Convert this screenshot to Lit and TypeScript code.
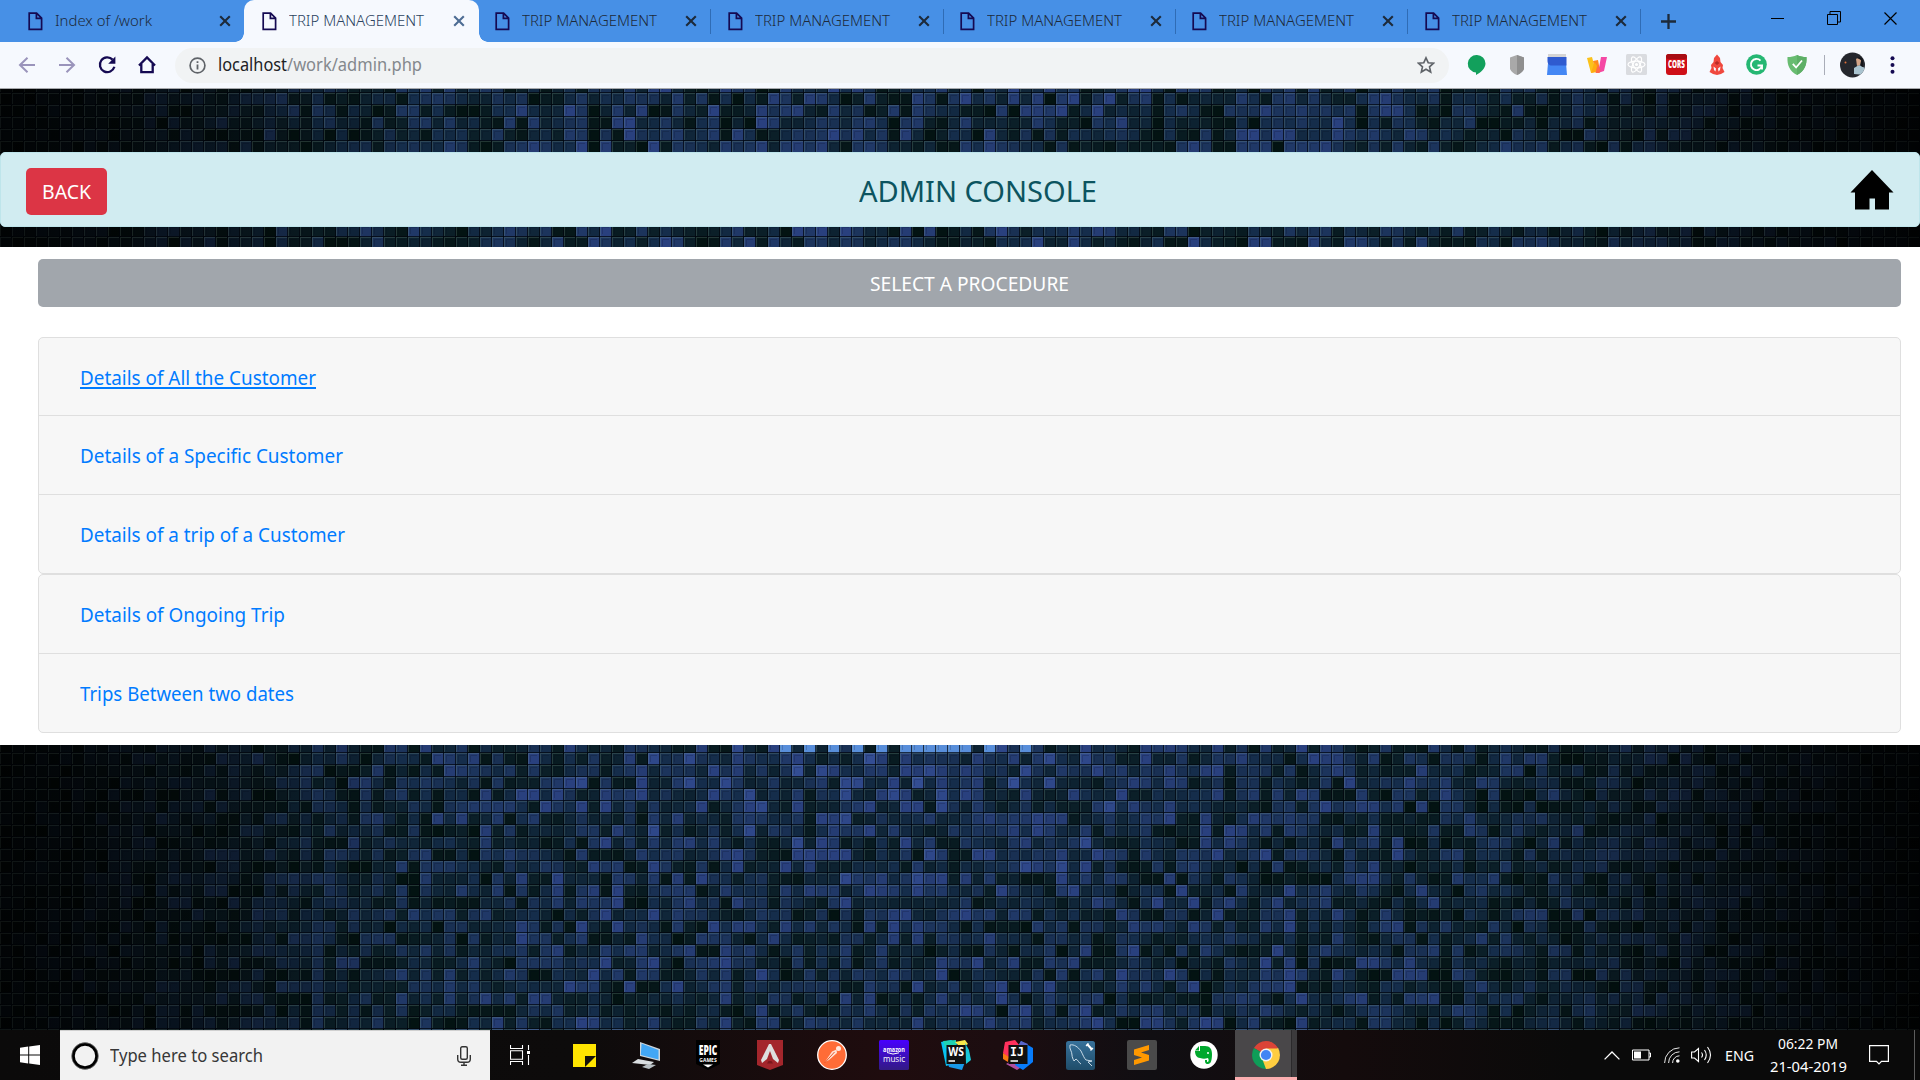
import { LitElement, html, svg, css, nothing } from "lit";
import { customElement, property, state } from "lit/decorators.js";
import { styleMap } from "lit/directives/style-map.js";
import { classMap } from "lit/directives/class-map.js";

/** Text condensed horizontally so that it occupies a given advance width. */
@customElement("fit-text")
class FitText extends LitElement {
  @property({ type: Number }) width = 0;
  @property() text = "";
  @state() private ratio = 1;

  static styles = css`
    :host { display: inline-block; white-space: pre; }
    .box { display: inline-block; vertical-align: top; }
    .glyphs { display: inline-block; vertical-align: top; transform-origin: 0 50%; }
    :host([underlined]) .glyphs { text-decoration: underline; text-decoration-thickness: 2px; text-underline-offset: 2px; text-decoration-skip-ink: none; }
  `;

  firstUpdated() {
    const glyphs = this.renderRoot.querySelector(".glyphs") as HTMLElement;
    const natural = glyphs.getBoundingClientRect().width;
    if (this.width && natural) this.ratio = this.width / natural;
  }

  render() {
    return html`<span class="box" style=${styleMap({ width: `${this.width}px` })}><span class="glyphs" style=${styleMap({ transform: `scaleX(${this.ratio.toFixed(4)})` })}>${this.text}</span></span>`;
  }
}

/** Mosaic wallpaper: 12px tiles, brightest in the middle and fading out sideways. */
@customElement("tile-wallpaper")
class TileWallpaper extends LitElement {
  static styles = css`
    :host { display: block; width: 1920px; height: 941px; }
    svg { display: block; }
  `;

  private noise(x: number, y: number) {
    let h = (x * 374761393 + y * 668265263) | 0;
    h = Math.imul(h ^ (h >>> 13), 1274126177);
    h = Math.imul(h ^ (h >>> 15), 2246822519);
    return ((h ^ (h >>> 16)) >>> 0) / 4294967296;
  }

  render() {
    const palette = [
      [3, 19, 18], [11, 31, 40], [18, 41, 66], [28, 52, 92], [41, 64, 126], [56, 84, 158],
    ];
    const glow = [65, 67, 69, 71, 73, 75, 76, 77, 78, 79, 80, 82, 85];
    const groups = new Map<string, string>();
    for (let r = 0; r < 80; r++) {
      if (r > 13 && r < 54) continue;
      for (let c = 0; c < 160; c++) {
        const px = c * 12;
        const py = r * 12 - 8;
        const d = Math.abs(px - 950) / 960;
        const env = Math.max(0, Math.min(1, (1 - d) * 1.7));
        const mid = Math.exp(-(Math.pow((px - 920) / 330, 2) + Math.pow((py - 680) / 110, 2)));
        let t = Math.pow(this.noise(c + 3, r + 11), 1.05) * (2.1 + 1.9 * env) + mid * 0.7;
        let k = 0.24 + 0.76 * Math.min(1, env * 1.35);
        t = Math.round(Math.min(5, t) * 3) / 3;
        k = Math.round(k * 14) / 14;
        const i = Math.min(4, Math.floor(t));
        const f = t - i;
        let rgb = palette[i].map((v, n) => Math.round((v + (palette[i + 1][n] - v) * f) * k));
        if (r === 55 && glow.includes(c)) rgb = [88, 142, 218];
        const key = `rgb(${rgb.join(",")})`;
        groups.set(key, (groups.get(key) ?? "") + `M${px} ${py}h12v12h-12z`);
      }
    }
    return html`<svg width="1920" height="941" viewBox="0 0 1920 941">
      <defs>
        <pattern id="bevel" width="12" height="12" y="4" patternUnits="userSpaceOnUse">
          <path d="M0 .5H11M.5 1V11" stroke="#86a89c" stroke-opacity=".24" fill="none" />
          <path d="M2.5 9V2.5H9" stroke="#000818" stroke-opacity=".18" fill="none" />
          <path d="M0 11.5H12M11.5 0V12" stroke="#00040c" stroke-opacity=".72" fill="none" />
        </pattern>
        <linearGradient id="edge">
          <stop offset="0" stop-color="#000" stop-opacity=".6" />
          <stop offset=".08" stop-color="#000" stop-opacity=".25" />
          <stop offset=".16" stop-color="#000" stop-opacity="0" />
          <stop offset=".84" stop-color="#000" stop-opacity="0" />
          <stop offset=".92" stop-color="#000" stop-opacity=".3" />
          <stop offset="1" stop-color="#000" stop-opacity=".7" />
        </linearGradient>
      </defs>
      ${[...groups].map(([fill, d]) => svg`<path fill=${fill} d=${d} />`)}
      <rect width="1920" height="941" fill="url(#bevel)" />
      <rect width="1920" height="941" fill="url(#edge)" />
    </svg>`;
  }
}

const pageIcon = html`<svg width="15" height="19" viewBox="0 0 15 19">
  <path d="M1.2 1.2H8.6L13.6 6.2V17.4H1.2Z M8.4 1.2V6.4H13.6" fill="none" stroke="#150a52" stroke-width="1.7" /></svg>`;

const crossIcon = html`<svg width="12" height="12" viewBox="0 0 12 12">
  <path d="M1.2 1.2L10.8 10.8M10.8 1.2L1.2 10.8" stroke="currentColor" stroke-width="2.1" /></svg>`;

@customElement("browser-tab")
class BrowserTab extends LitElement {
  @property() label = "";
  @property({ type: Number }) textWidth = 0;
  @property({ type: Boolean, reflect: true }) active = false;
  @property({ type: Boolean }) divider = false;

  static styles = css`
    :host { display: block; width: 232.4px; height: 42px; flex: none; color: #1d2a3a; }
    .tab {
      display: flex; align-items: center; box-sizing: border-box; height: 42px;
      padding-left: 14px; position: relative;
    }
    .divided { padding-left: 16.5px; }
    .active { background: #f6f9fe; border-radius: 10px 10px 0 0; margin-left: -2px; padding-left: 18px; color: #2b435f; }
    .active::before, .active::after {
      content: ""; position: absolute; bottom: 0; width: 9px; height: 9px;
    }
    .active::before { left: -9px; background: radial-gradient(circle at 0 0, transparent 8.5px, #f6f9fe 9px); }
    .active::after { right: -9px; background: radial-gradient(circle at 100% 0, transparent 8.5px, #f6f9fe 9px); }
    .text { flex: 1; padding-left: 12px; font-size: 15px; font-weight: 300; line-height: 22px; margin-top: -3px; }
    .close { display: flex; width: 12px; margin-right: 15px; }
    .divided .close { margin-right: 13px; }
    .active .close { color: #4d6c93; margin-right: 14px; }
    .sep { width: 1px; height: 25px; background: #2f6cb5; }
  `;

  render() {
    return html`<div class=${classMap({ tab: true, active: this.active, divided: this.divider })}>
      ${pageIcon}
      <fit-text class="text" .width=${this.textWidth} .text=${this.label}></fit-text>
      <span class="close">${crossIcon}</span>
      ${this.divider ? html`<span class="sep"></span>` : nothing}
    </div>`;
  }
}

const nav = {
  back: html`<svg width="18" height="18" viewBox="0 0 18 18"><path d="M17 9H2.5M9.5 1.7L2 9l7.5 7.3" fill="none" stroke="#9a94bb" stroke-width="2" /></svg>`,
  forward: html`<svg width="18" height="18" viewBox="0 0 18 18"><path d="M1 9H15.5M8.5 1.7L16 9l-7.500 7.3" fill="none" stroke="#9a94bb" stroke-width="2" /></svg>`,
  reload: html`<svg width="20" height="20" viewBox="0 0 20 20"><path d="M15.6 4.6A7.4 7.4 0 1 0 17.4 11.8" fill="none" stroke="#150a52" stroke-width="2.3" /><path d="M18.4 1.6V8.8H11.2Z" fill="#150a52" /></svg>`,
  home: html`<svg width="20" height="20" viewBox="0 0 20 20"><path d="M4.3 9V17.2H15.7V9M2 10.5L10 2.4L18 10.5" fill="none" stroke="#150a52" stroke-width="2.3" /></svg>`,
};

const extensions = [
  html`<svg width="20" height="22" viewBox="0 0 20 22"><path d="M10 1a8.7 8.7 0 0 0-1 17.4V21c4.5-2.2 9.5-6.5 9.5-11.5A8.6 8.6 0 0 0 10 1z" fill="#12a05c" /></svg>`,
  html`<svg width="16" height="22" viewBox="0 0 16 22"><path d="M8 1L15 3.500V15Q13 19 8 21Q3 19 1 15V3.500z" fill="#a9a9a9" /><path d="M8 1L15 3.500V15Q13 19 8 21z" fill="#8f8f8f" /></svg>`,
  html`<svg width="20" height="21" viewBox="0 0 20 21"><path d="M1 0h18v5H1z" fill="#d4d4d4" /><path d="M1 9h18l1 12H0z" fill="#4487f4" /><path d="M.5 3h19v8.500h-16C1.500 11 .5 9 .5 7z" fill="#2f5bd0" /></svg>`,
  html`<svg width="20" height="16" viewBox="0 0 20 16"><path d="M0 1L5 0 9 15 4 16Z" fill="#fbc21b" /><path d="M6 4L11 3 13 14 9 16Z" fill="#ff8a1f" /><path d="M4 16L7.500 5 10 9 8.500 15Z" fill="#ffab10" /><path d="M11 16L14 0H20L17 14Z" fill="#f548a4" /><path d="M8.500 16L11 8 13.500 13 12.500 16Z" fill="#ff6a4a" /></svg>`,
  html`<svg width="21" height="21" viewBox="0 0 21 21"><rect width="21" height="21" rx="1.500" fill="#dadce0" /><g fill="none" stroke="#fff" stroke-width="1.200"><ellipse cx="10.500" cy="10.500" rx="8.500" ry="3.300" /><ellipse cx="10.500" cy="10.500" rx="8.500" ry="3.300" transform="rotate(60 10.500 10.500)" /><ellipse cx="10.500" cy="10.500" rx="8.500" ry="3.300" transform="rotate(120 10.500 10.500)" /></g><circle cx="10.500" cy="10.500" r="1.600" fill="#fff" /></svg>`,
  html`<svg width="21" height="21" viewBox="0 0 21 21"><rect width="21" height="21" rx="3" fill="#cf0f17" /><rect width="21" height="5" rx="2.500" fill="#a80d13" /><g transform="translate(10.500 14) scale(.7 1.1)"><text font-family="Open Sans, sans-serif" font-weight="800" font-size="9" fill="#fff" text-anchor="middle">CORS</text></g></svg>`,
  html`<svg width="16" height="22" viewBox="0 0 16 22"><path d="M8 .500L11 4 11.500 8 14 11 13.500 14 15.500 18 12 20 8 21 4 20 .500 18 2.500 14 2 11 4.500 8 5 4Z" fill="#f0483e" /><path d="M4.500 12.500L7 14.500 6.500 17.500 5 16ZM11.500 12.500L9 14.500 9.500 17.500 11 16Z" fill="#f6f9fe" /><path d="M5.500 9L8 7 10.500 9 8 11Z" fill="#b92c27" /></svg>`,
  html`<svg width="21" height="21" viewBox="0 0 21 21"><circle cx="10.500" cy="10.500" r="10.300" fill="#25b773" /><path d="M14.500 6.600A5.600 5.600 0 1 0 16 11.500H11.500M16 11v4.500" fill="none" stroke="#fff" stroke-width="1.900" /></svg>`,
  html`<svg width="20" height="22" viewBox="0 0 20 22"><path d="M10 1c3 1.500 6 2 9.500 2 .5 8-2 14-9.500 18C2.500 17 0 11 .5 3 4 3 7 2.500 10 1z" fill="#68bc71" /><path d="M10 1c3 1.500 6 2 9.500 2 .5 8-2 14-9.500 18z" fill="#5daf66" /><path d="M5.800 9.800l3.300 3.700L15 6.500" fill="none" stroke="#fff" stroke-width="1.800" /></svg>`,
];

@customElement("browser-chrome")
class BrowserChrome extends LitElement {
  static styles = css`
    :host { display: block; }
    .strip { display: flex; height: 42px; background: #4790e6; padding-left: 14px; }
    .plus { display: flex; align-items: center; padding-left: 20.500px; flex: 1; color: #1d2a3a; }
    .win { display: flex; align-items: center; height: 36px; padding-right: 1px; }
    .win span { display: flex; justify-content: center; width: 56.500px; }
    .bar { display: flex; align-items: center; height: 46px; background: #f6f9fe; padding-left: 7px; border-bottom: 1px solid #a6a8ab; }
    .cell { display: flex; align-items: center; justify-content: center; width: 40px; flex: none; margin-top: -1px; }
    .omni {
      display: flex; align-items: center; box-sizing: border-box; width: 1274px; height: 35px; border-radius: 18px;
      background: #f1f3f4; margin: 0 7.500px 0 8px; padding: 0 14px; font-size: 17.500px; line-height: 24px;
    }
    .host { margin: -2px 0 0 11.500px; color: #202124; }
    .path { flex: 1; margin-top: -2px; color: #84888d; }
    .rule { width: 16px; display: flex; justify-content: center; }
    .rule i { width: 1px; height: 20px; background: #a9adb8; }
  `;

  private tabs = [
    { label: "Index of /work", width: 97 },
    ...Array.from({ length: 6 }, () => ({ label: "TRIP MANAGEMENT", width: 135 })),
  ];

  render() {
    return html`
      <div class="strip">
        ${this.tabs.map((t, i) => html`<browser-tab .label=${t.label} .textWidth=${t.width} .active=${i === 1} .divider=${i > 1}></browser-tab>`)}
        <span class="plus"><svg width="15" height="15" viewBox="0 0 15 15"><path d="M7.500 0V15M0 7.500H15" stroke="currentColor" stroke-width="2.300" /></svg></span>
        <div class="win">
          <span><svg width="13" height="13" viewBox="0 0 13 13"><path d="M0 6.500H13" stroke="#000" /></svg></span>
          <span><svg width="14" height="14" viewBox="0 0 14 14"><path d="M.500 3.500H10.500V13.500H.500ZM3 3V.500H13.500V11H11" fill="none" stroke="#000" /></svg></span>
          <span><svg width="13" height="13" viewBox="0 0 13 13"><path d="M.500 .500L12.500 12.500M12.500 .500L.500 12.500" stroke="#000" stroke-width="1.200" /></svg></span>
        </div>
      </div>
      <div class="bar">
        ${Object.values(nav).map((i) => html`<span class="cell">${i}</span>`)}
        <div class="omni">
          <svg width="17" height="17" viewBox="0 0 17 17"><circle cx="8.500" cy="8.500" r="7.400" fill="none" stroke="#5f6368" stroke-width="1.700" /><path d="M8.500 7.500V12.500M8.500 4.200V6" stroke="#5f6368" stroke-width="1.800" /></svg>
          <fit-text class="host" .width=${69} .text=${"localhost"}></fit-text>
          <fit-text class="path" .width=${135} .text=${"/work/admin.php"}></fit-text>
          <svg width="18" height="18" viewBox="0 0 18 18"><path d="M9 1.800L11.200 6.700L16.500 7.200L12.500 10.800L13.700 16L9 13.200L4.300 16L5.500 10.800L1.500 7.200L6.800 6.700Z" fill="none" stroke="#5f6368" stroke-width="1.600" /></svg>
        </div>
        ${extensions.map((i) => html`<span class="cell">${i}</span>`)}
        <span class="rule"><i></i></span>
        <span class="cell"><svg width="25" height="26" viewBox="0 0 25 26"><defs><clipPath id="av"><circle cx="12.500" cy="13" r="12.500" /></clipPath></defs><g clip-path="url(#av)"><rect width="25" height="26" fill="#25272d" /><path d="M14 16l5-3 6 3v7l-11-1z" fill="#a9c3cf" /><path d="M16 7c2-2 5-1 5 2l-1 4-3 1z" fill="#d3a487" /><path d="M17 6c3-2 6 0 6 3v6l-2-1V8z" fill="#15161a" /><circle cx="5.500" cy="10.500" r="1" fill="#e0703a" /></g></svg></span>
        <span class="cell"><svg width="5" height="18" viewBox="0 0 5 18"><g fill="#150a52"><circle cx="2.500" cy="2.300" r="2" /><circle cx="2.500" cy="9" r="2" /><circle cx="2.500" cy="15.700" r="2" /></g></svg></span>
      </div>`;
  }
}

@customElement("admin-page")
class AdminPage extends LitElement {
  static styles = css`
    :host { display: grid; height: 941px; overflow: hidden; background: #02060a; }
    tile-wallpaper, .content { grid-area: 1 / 1; }
    .content { display: flex; flex-direction: column; position: relative; padding-top: 63px; }
    .alert {
      display: flex; align-items: center; box-sizing: border-box; height: 75px; margin-bottom: 20px; padding: 0 25px;
      background: #d1ecf1; border: 1px solid #bee5eb; border-radius: 5px; color: #0c5460;
    }
    .back { display: flex; align-items: center; justify-content: center; width: 81px; height: 47px; border-radius: 5px; background: #dc3545; color: #fff; font-size: 20px; margin-top: 4px; line-height: 30px; }
    .title { flex: 1; text-align: center; font-size: 29.500px; line-height: 40px; margin: 3px 2px 0 0; }
    .panel { background: #fff; padding: 12px 19px 12px 38px; }
    .head {
      display: flex; align-items: center; justify-content: center; height: 48px; border-radius: 5px; margin-bottom: 30px;
      background: #a1a6ac; color: #fff; font-size: 20px; line-height: 28px;
    }
    .group { border: 1px solid #dfdfdf; border-radius: 5px; background: #f7f7f7; overflow: hidden; }
    .row { display: flex; align-items: center; box-sizing: border-box; height: 79px; padding-left: 41px; }
    .row + .row { border-top: 1px solid #dfdfdf; }
    .first { height: 77px; }
    .short { height: 78px; }
    .link { color: #007bff; font-size: 20px; line-height: 28px; padding-top: 2px; }
    .back-text, .head-text { padding-top: 1px; }
  `;

  private groups = [
    [
      { text: "Details of All the Customer", width: 236, hover: true },
      { text: "Details of a Specific Customer", width: 263 },
      { text: "Details of a trip of a Customer", width: 265 },
    ],
    [
      { text: "Details of Ongoing Trip", width: 205 },
      { text: "Trips Between two dates", width: 214 },
    ],
  ];

  render() {
    return html`
      <tile-wallpaper></tile-wallpaper>
      <div class="content">
        <div class="alert">
          <span class="back"><fit-text class="back-text" .width=${49} .text=${"BACK"}></fit-text></span>
          <span class="title"><fit-text .width=${238} .text=${"ADMIN CONSOLE"}></fit-text></span>
          <svg width="44" height="40" viewBox="0 0 44 40"><path d="M22 0L43.500 22.500H39V39.500H25V28.500H19.500V39.500H5V22.500H.500Z" fill="#000" /></svg>
        </div>
        <div class="panel">
          <div class="head"><fit-text class="head-text" .width=${199} .text=${"SELECT A PROCEDURE"}></fit-text></div>
          ${this.groups.map((g, gi) => html`<div class="group">
            ${g.map((r: any, i) => html`<div class=${classMap({ row: true, first: gi === 0 && i === 0, short: gi === 1 && i === 0 })}>
              <fit-text class="link" ?underlined=${!!r.hover} .width=${r.width} .text=${r.text}></fit-text>
            </div>`)}
          </div>`)}
        </div>
      </div>`;
  }
}

const apps = [
  html`<svg width="23" height="23" viewBox="0 0 23 23"><path d="M0 0H23V23H0Z" fill="#ffe500" /><path d="M12 12H23V23H12Z" fill="#14120a" /><path d="M23 12V23H12Z" fill="#ffe500" /></svg>`,
  html`<svg width="28" height="28" viewBox="0 0 28 28"><path d="M8 1L28 8V20L8 15Z" fill="#cfd6da" /><path d="M9.500 2.500L26.500 9V18.500L8.800 14Z" fill="#42a7f5" /><path d="M6 18L22 21 18 24 0 22Z" fill="#d9dde0" /><path d="M16 23l8 1-7 4-7-2z" fill="#b9c0c5" /></svg>`,
  html`<svg width="26" height="30" viewBox="0 0 26 30"><path d="M1 0H25V24L13 30L1 24Z" fill="#000" /><g fill="#fff" text-anchor="middle" font-family="Open Sans, sans-serif"><g transform="translate(13 15) scale(.68 1.15)"><text font-weight="800" font-size="12.500">EPIC</text></g><g transform="translate(13 22)"><text font-weight="700" font-size="5">GAMES</text></g></g><path d="M8 24.500H18L13 27.500Z" fill="#fff" /></svg>`,
  html`<svg width="26" height="30" viewBox="0 0 26 30"><path d="M0 0H26V25L13 30L0 25Z" fill="#a4262c" /><path d="M12 4H14L17 10 22 20 21 23 16 19 13 11 10 19 5 23 4 20 9 10Z" fill="#dedede" /><path d="M11.500 21h3l1.500 2.500h-6z" fill="#7c171d" /></svg>`,
  html`<svg width="30" height="30" viewBox="0 0 30 30"><circle cx="15" cy="15" r="14.300" fill="#ff6c37" stroke="#fff" stroke-width="1.300" /><circle cx="21.500" cy="8.500" r="2.500" fill="#ffe9df" /><path d="M8 22L15 11.500 19.500 9.500 20 13 12 20Z" fill="#ffe1d3" /><path d="M7.500 23L17.500 12" stroke="#e8572a" /></svg>`,
  html`<svg width="30" height="30" viewBox="0 0 30 30"><defs><linearGradient id="am" x2="0" y2="1"><stop stop-color="#4800ff" /><stop offset="1" stop-color="#321a83" /></linearGradient></defs><rect width="30" height="30" rx="1.500" fill="url(#am)" /><g fill="#fff" text-anchor="middle" font-family="Open Sans, sans-serif"><g transform="translate(15 11.500) scale(.85 1)"><text font-weight="700" font-size="6.500">amazon</text></g><g transform="translate(15 21.500) scale(.95 1)"><text font-size="8.500">music</text></g></g><path d="M8 12.500Q14 15.500 20 12.800" fill="none" stroke="#fff" /></svg>`,
  html`<svg width="30" height="30" viewBox="0 0 30 30"><path d="M0 2L10 0 16 3 12 24 5 26Z" fill="#07c3f2" /><path d="M2 1l13-1v8H4z" fill="#20d3b4" /><path d="M14 2L24 0 27 4 20 8Z" fill="#f7e94b" /><path d="M24 3l4 7 2 10-5 4z" fill="#18c8d8" /><path d="M7 24L24 22 21 30 8 27Z" fill="#1899e8" /><rect x="5.500" y="5" width="19" height="19" fill="#101010" /><g transform="translate(15 16.300) scale(.9 1)"><text text-anchor="middle" font-family="Open Sans, sans-serif" font-weight="700" font-size="11.500" fill="#fff">WS</text></g><path d="M7.500 21H14" stroke="#fff" stroke-width="1.500" /></svg>`,
  html`<svg width="30" height="30" viewBox="0 0 30 30"><path d="M2 2L12 0 17 6 8 20 0 13Z" fill="#fe315d" /><path d="M0 13L6 17 5 22 0 19Z" fill="#f97a12" /><path d="M3 24L10 20 20 26 14 30Z" fill="#b04fa0" /><path d="M18 1L30 8V22L20 30 12 25 16 5Z" fill="#087cfa" /><path d="M18 1l7 3-2 4-8-2z" fill="#5965c8" /><rect x="5.500" y="5" width="19" height="19" fill="#101010" /><text x="7" y="16.300" font-family="DejaVu Sans Mono, monospace" font-weight="700" font-size="11.500" fill="#fff">IJ</text><path d="M7.500 21H15" stroke="#fff" stroke-width="1.500" /></svg>`,
  html`<svg width="29" height="29" viewBox="0 0 29 29"><defs><linearGradient id="my" x2="0" y2="1"><stop stop-color="#37719a" /><stop offset="1" stop-color="#1f4d6a" /></linearGradient></defs><rect width="29" height="29" rx="2.500" fill="url(#my)" /><path d="M4 4C8 3 12 6 15 10C17 14 18 17 20 19L26 20L22 21L26 25M4 4C3 8 6 10 6 14C6 16 7 18 8 20L10 18C12 19 13 22 15 23" fill="none" stroke="#d8e7f0" stroke-width=".9" /><path d="M21 3L26 8.500" stroke="#fff" stroke-width="2" /><path d="M20 5l2.500-2.500M24.500 9.500L27 7" stroke="#fff" stroke-width="1.200" /></svg>`,
  html`<svg width="30" height="30" viewBox="0 0 30 30"><rect width="30" height="30" rx="2" fill="#4a4a4a" /><path d="M7 9.500L22 5V10L14 12.500L22 15V20.500L7 25V20L15 17.500L7 15Z" fill="#ff9800" /></svg>`,
  html`<svg width="28" height="28" viewBox="0 0 28 28"><circle cx="14" cy="14" r="13.700" fill="#fff" /><path d="M10 5h5c5 0 7 3 7 8 0 6-1 10-4 10-3 0-3-2-3-4h2v2c2 0 2-2 1-4-3 1-5 1-8 0-3 0-5-3-5-7h5z" fill="#00a82d" /><path d="M9 5L5 9.500h4z" fill="#00a82d" /><circle cx="18" cy="12" r="1" fill="#fff" /></svg>`,
];

const chromeIcon = html`<svg width="28" height="28" viewBox="0 0 28 28">
  <path d="M14 14L1.900 7A14 14 0 0 1 26.100 7Z" fill="#db4437" /><path d="M14 14L26.100 7A14 14 0 0 1 14 28Z" fill="#ffcd40" /><path d="M14 14V28A14 14 0 0 1 1.900 7Z" fill="#0f9d58" />
  <path d="M14 7.500H26.300L20 16Z" fill="#ffcd40" /><path d="M19.600 17.200L14 28L11 20Z" fill="#ffcd40" />
  <circle cx="14" cy="14" r="6.500" fill="#f4f4f4" /><circle cx="14" cy="14" r="5.100" fill="#4285f4" /></svg>`;

@customElement("task-bar")
class TaskBar extends LitElement {
  static styles = css`
    :host {
      display: flex; height: 50px; color: #fff;
      background: linear-gradient(90deg, #0b0a0a 0, #0d0b0b 30%, #1f0c0e 46%, #1c0d10 52%, #100e12 60%, #140b0c 70%, #0a0a0a 82%);
    }
    .start { width: 60px; display: flex; align-items: center; justify-content: center; }
    .search { display: flex; align-items: center; box-sizing: border-box; width: 430px; background: #f2f2f2; color: #373737; padding: 0 19px 0 11px; border-top: 1px solid #cfcfcf; }
    .query { flex: 1; font-size: 18px; line-height: 26px; padding-left: 11px; margin-top: -1px; }
    .view { display: flex; align-items: center; width: 63px; box-sizing: border-box; padding-left: 20px; }
    .app { display: flex; align-items: center; justify-content: center; width: 62px; }
    .current { box-sizing: border-box; width: 62px; background: linear-gradient(90deg, #494749 0 56px, #2b292b 56px 57px, #3c3a3c 57px); border-bottom: 3px solid #fbaeb0; padding-top: 3px; }
    .tray { flex: 1; display: flex; align-items: center; justify-content: flex-end; font-size: 15px; }
    .caret { margin-right: 12px; }
    .battery { margin-right: 13px; }
    .wifi { margin-right: 11px; }
    .volume { margin-right: 13px; }
    .lang { line-height: 20px; }
    .clock { display: flex; flex-direction: column; align-items: center; width: 78px; line-height: 23px; margin: 0 22px 0 15px; }
    .note { margin-right: 25px; }
    .desk { width: 5px; align-self: stretch; border-left: 1px solid #5c5c5c; }
    svg { flex: none; }
  `;

  render() {
    return html`
      <div class="start"><svg width="20" height="20" viewBox="0 0 20 20"><path d="M0 2.800L8.200 1.600V9.500H0ZM9.200 1.500L20 0V9.500H9.200ZM0 10.500H8.200V18.400L0 17.200ZM9.200 10.500H20V20L9.200 18.500Z" fill="#fff" /></svg></div>
      <div class="search">
        <svg width="28" height="28" viewBox="0 0 28 28"><circle cx="14" cy="14" r="11.800" fill="none" stroke="#000" stroke-width="3.200" /><circle cx="14" cy="14" r="13.300" fill="none" stroke="#888" stroke-opacity=".6" /></svg>
        <fit-text class="query" .width=${153} .text=${"Type here to search"}></fit-text>
        <svg width="14" height="20" viewBox="0 0 14 20"><g fill="none" stroke="#333" stroke-width="1.400"><rect x="3.700" y=".700" width="6.600" height="12.600" rx="1.500" /><path d="M.700 9V13Q.700 16.300 4 16.300H10Q13.300 16.300 13.300 13V9M7 16.300V19.300M4 19.300H10" /></g></svg>
      </div>
      <div class="view"><svg width="20" height="20" viewBox="0 0 20 20"><g fill="none" stroke="#fff" stroke-width="1.100"><path d="M.500 0V3.500H12.500V0M.500 5.800H12.500V14.200H.500ZM.500 20V16.500H12.500V20M18.500 0V5M18.500 10V20" /></g><rect x="17" y="6" width="3" height="3" fill="#fff" /></svg></div>
      ${apps.map((a) => html`<span class="app">${a}</span>`)}
      <span class="app current">${chromeIcon}</span>
      <div class="tray">
        <svg class="caret" width="16" height="9" viewBox="0 0 16 9"><path d="M.600 8.400L8 1L15.400 8.400" fill="none" stroke="#fff" stroke-width="1.300" /></svg>
        <svg class="battery" width="19" height="12" viewBox="0 0 19 12"><path d="M.500 1H17V11H.500ZM17 4H18.500V8H17" fill="none" stroke="#fff" /><rect x="2" y="2.500" width="7" height="7" fill="#fff" /></svg>
        <svg class="wifi" width="16" height="16" viewBox="0 0 16 16"><g fill="none" stroke="#e8e8e8"><path d="M.600 16A15 15 0 0 1 15.500 .800M4.600 16A11 11 0 0 1 15.500 4.800M8.600 16A7 7 0 0 1 15.500 8.800" /></g><circle cx="13.800" cy="14" r="1.800" fill="#fff" /></svg>
        <svg class="volume" width="21" height="18" viewBox="0 0 21 18"><g fill="none" stroke="#fff" stroke-width="1.100"><path d="M.600 6H3.500L7.500 2.500V15.500L3.500 12H.600ZM10.500 6.500Q12.500 9 10.500 11.500M13.500 4Q17 9 13.500 14M16.500 1Q22.500 9 16.500 17" /></g></svg>
        <fit-text class="lang" .width=${29} .text=${"ENG"}></fit-text>
        <div class="clock"><fit-text .width=${60} .text=${"06:22 PM"}></fit-text><fit-text .width=${77} .text=${"21-04-2019"}></fit-text></div>
        <svg class="note" width="20" height="20" viewBox="0 0 20 20"><path d="M.600 .600H19.400V16.400H12.500L10 19L7.500 16.400H.600Z" fill="none" stroke="#fff" stroke-width="1.200" /></svg>
        <span class="desk"></span>
      </div>`;
  }
}

@customElement("app-root")
class AppRoot extends LitElement {
  static styles = css`
    :host {
      display: flex; flex-direction: column; width: 1920px; height: 1080px; overflow: hidden;
      font-family: "Noto Sans", "Open Sans", sans-serif; font-weight: 400;
    }
  `;

  render() {
    return html`<browser-chrome></browser-chrome><admin-page></admin-page><task-bar></task-bar>`;
  }
}
